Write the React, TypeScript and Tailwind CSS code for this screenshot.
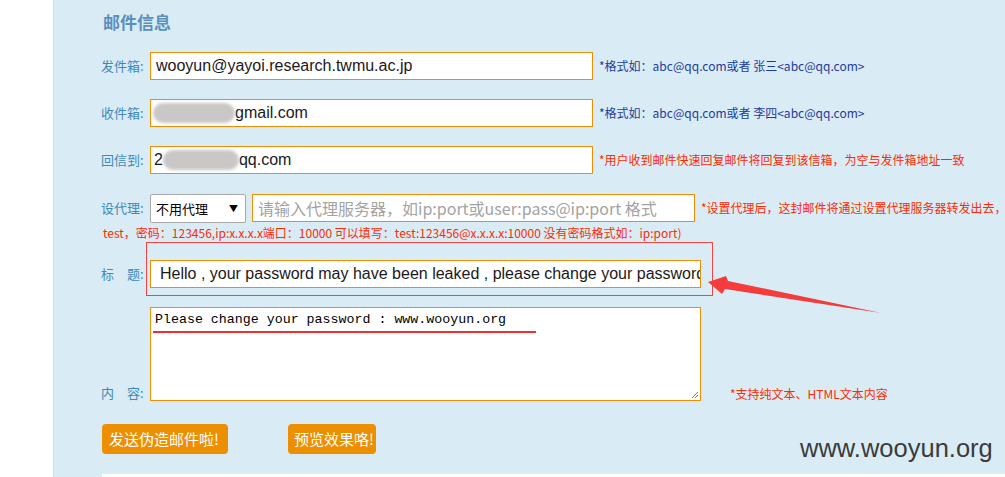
import React from 'react';

const cjk = { fontFamily: '"Noto Sans CJK SC", "Liberation Sans", sans-serif' };
const latin = { fontFamily: '"Liberation Sans", "Noto Sans CJK SC", sans-serif' };
const mono = { fontFamily: '"Liberation Mono", "Noto Sans CJK SC", monospace' };

const Label: React.FC<{ text: string }> = ({ text }) => (
    <span className="w-[49px] shrink-0 text-[13px] leading-[16px] text-[#3f89b7]" style={cjk}>
        {text}
    </span>
);

const Blur: React.FC<{ w: number }> = ({ w }) => (
    <span
        className="inline-block h-[20px] rounded-full bg-[#cac8c7] blur-[1.5px] align-middle"
        style={{ width: w }}
    />
);

const Hint: React.FC<{ children: React.ReactNode; red?: boolean }> = ({ children, red }) => (
    <span
        className={`ml-[6px] whitespace-nowrap text-[12px] leading-[14px] ${red ? 'text-[#ff2a00]' : 'text-[#1f3b9a]'}`}
        style={cjk}
    >
        {children}
    </span>
);

const App: React.FC = () => {
    return (
        <div className="flex h-[477px] w-[1005px] overflow-hidden bg-white">
            <div className="w-[53px] shrink-0 bg-white" />
            <div className="relative flex flex-1 flex-col border-l border-[#c3deed] bg-[#d9ecf6] pl-[47px]">
                <h2 className="pt-[12px] pl-[2px] text-[17px] font-bold leading-[20px] text-[#5a90bb]" style={cjk}>
                    邮件信息
                </h2>

                {/* 发件箱 */}
                <div className="mt-[20px] flex h-[28px] items-center">
                    <Label text="发件箱:" />
                    <div className="flex h-[28px] w-[443px] items-center border border-[#ee8e00] bg-white pl-[5px] text-[16px] text-[#1a1a1a]" style={latin}>
                        wooyun@yayoi.research.twmu.ac.jp
                    </div>
                    <Hint>*格式如：abc@qq.com或者 张三&lt;abc@qq.com&gt;</Hint>
                </div>

                {/* 收件箱 */}
                <div className="mt-[19px] flex h-[28px] items-center">
                    <Label text="收件箱:" />
                    <div className="flex h-[28px] w-[443px] items-center border border-[#ee8e00] bg-white pl-[2px] text-[16px] text-[#1a1a1a]" style={latin}>
                        <Blur w={82} />
                        <span>gmail.com</span>
                    </div>
                    <Hint>*格式如：abc@qq.com或者 李四&lt;abc@qq.com&gt;</Hint>
                </div>

                {/* 回信到 */}
                <div className="mt-[19px] flex h-[28px] items-center">
                    <Label text="回信到:" />
                    <div className="flex h-[28px] w-[443px] items-center border border-[#ee8e00] bg-white pl-[3px] text-[16px] text-[#1a1a1a]" style={latin}>
                        <span>2</span>
                        <Blur w={76} />
                        <span>qq.com</span>
                    </div>
                    <Hint red>*用户收到邮件快速回复邮件将回复到该信箱，为空与发件箱地址一致</Hint>
                </div>

                {/* 设代理 */}
                <div className="mt-[19px] flex h-[29px] items-center">
                    <Label text="设代理:" />
                    <div className="mt-[2px] flex h-[29px] w-[96px] shrink-0 items-center justify-between rounded-[2px] border border-[#a9a9a9] bg-white pl-[5px] pr-[7px] text-[13px] text-black" style={cjk}>
                        <span>不用代理</span>
                        <span className="text-[9px]">▼</span>
                    </div>
                    <div className="ml-[6px] flex h-[28px] w-[443px] shrink-0 items-center border border-[#ee8e00] bg-white pl-[5px] text-[16px] text-[#a3a3a3]" style={cjk}>
                        请输入代理服务器，如ip:port或user:pass@ip:port 格式
                    </div>
                    <Hint red>*设置代理后，这封邮件将通过设置代理服务器转发出去，</Hint>
                </div>
                <p className="mt-[4px] whitespace-nowrap pl-[2px] text-[12px] leading-[14px] text-[#ff2a00]" style={cjk}>
                    test，密码：123456,ip:x.x.x.x端口：10000 可以填写：test:123456@x.x.x.x:10000 没有密码格式如：ip:port)
                </p>

                {/* 标题 */}
                <div className="relative mt-[20px] flex h-[28px] items-center">
                    <Label text="标　题:" />
                    <div className="flex h-[28px] w-[551px] items-center overflow-hidden whitespace-nowrap border border-[#ee8e00] bg-white pl-[9px] text-[16px] text-[#1a1a1a]" style={latin}>
                        Hello , your password may have been leaked , please change your password
                    </div>
                    <div className="pointer-events-none absolute left-[45px] top-[-18px] h-[54px] w-[567px] border border-[#f04444]" />
                </div>

                {/* 内容 */}
                <div className="mt-[19px] flex items-end">
                    <Label text="内　容:" />
                    <div className="relative h-[94px] w-[551px] shrink-0 border border-[#ee8e00] bg-white px-[4px] pt-[4px] text-[13.3px] leading-[16px] text-black" style={mono}>
                        Please change your password : www.wooyun.org
                        <div className="absolute left-[2px] top-[23px] h-[2px] w-[383px] bg-[#f03030]" />
                        <svg className="absolute bottom-[1px] right-[1px]" width="8" height="8" viewBox="0 0 8 8">
                            <path d="M7 1 L1 7 M7 4 L4 7" stroke="#777" strokeWidth="1" />
                        </svg>
                    </div>
                    <Hint red>
                        <span className="ml-[23px]">*支持纯文本、HTML文本内容</span>
                    </Hint>
                </div>

                {/* 按钮 */}
                <div className="mt-[23px] flex items-center">
                    <button className="ml-[1px] h-[30px] w-[126px] rounded-[4px] bg-[#ec8f00] text-left pl-[7px] text-[15px] text-white" style={cjk}>
                        发送伪造邮件啦!
                    </button>
                    <button className="ml-[60px] h-[30px] w-[88px] rounded-[4px] bg-[#ec8f00] text-left pl-[6px] text-[15px] text-white" style={cjk}>
                        预览效果咯!
                    </button>
                </div>

                <div className="mt-[20px] ml-[1px] h-[10px] bg-white" />

                {/* 箭头标注 */}
                <svg className="pointer-events-none absolute left-0 top-0" width="952" height="477" viewBox="53 0 952 477">
                    <polygon points="707,282 725,276 727,281 880,313 724,289 721,294" fill="#f53b3b" />
                </svg>

                <span className="pointer-events-none absolute left-[746px] top-[432px] text-[25.5px] leading-[32px] text-[#3b3b3b]" style={latin}>
                    www.wooyun.org
                </span>
            </div>
        </div>
    );
};

export default App;
